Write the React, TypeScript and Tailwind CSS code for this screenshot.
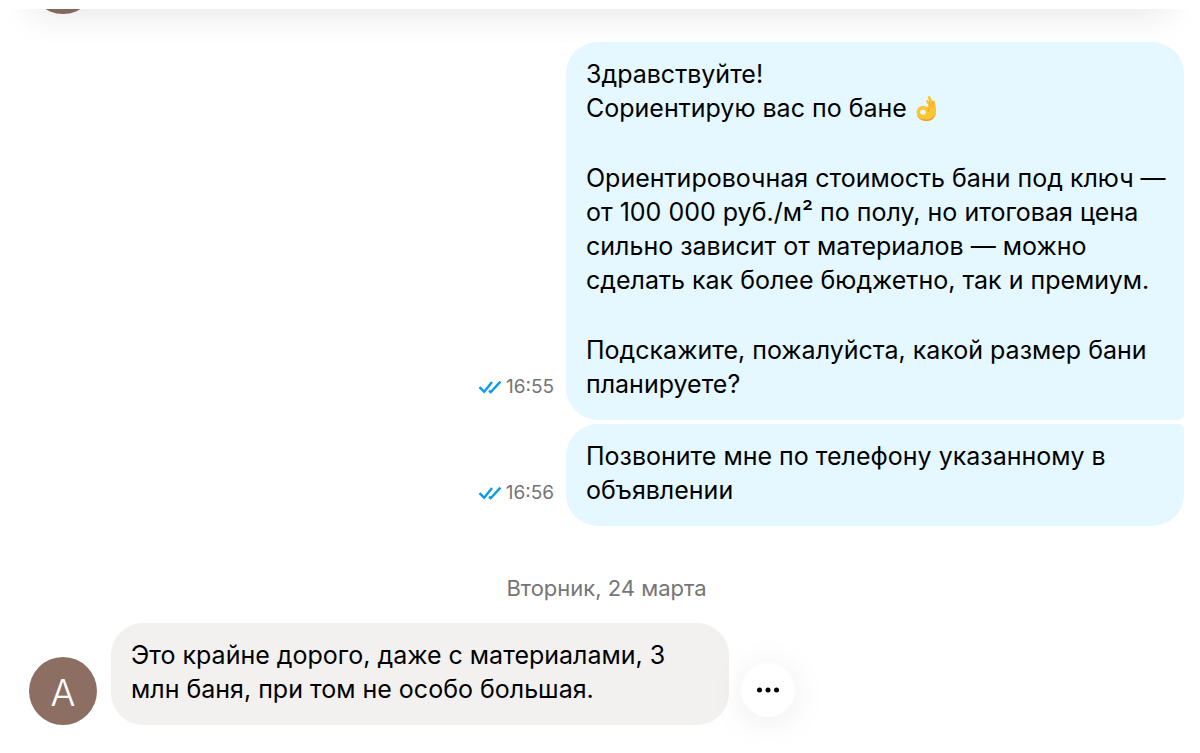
import type { ReactNode } from 'react';

function ReadMark() {
  return (
    <svg viewBox="0 0 24 16" className="h-4 w-6 shrink-0" fill="none" stroke="#0a9af0" strokeWidth="2.4" role="img" aria-label="Прочитано">
      <path d="M1.5 8.2 6.2 12.8 14 3" />
      <path d="M11 11.8 12.7 13.2 22.4 2.6" />
    </svg>
  );
}

function OkHand() {
  return (
    <svg viewBox="0 0 21 27" className="ml-0.5 inline-block h-[27px] w-[21px] align-[-5px]" role="img" aria-label="Всё хорошо">
      <path
        fillRule="evenodd"
        fill="#fcc633"
        d="M12.3 1.2c1-.8 2 .1 2.5 1.3L16.3 6c.4-.9 2.2-.8 2.5.4.7 2.8 1.3 6 1.3 9.300 0 6-3.800 10.300-9.300 10.300C5.500 26 1.300 23 .7 18.600.300 15.300 1.800 12 5.200 11.200c2.300-.6 4.800-.1 6.600 1.300l.5-2.200-1.900-3.500c-.6-1.300.8-2.500 1.800-1.300l1.200 1.600-1.500-4.100c-.2-.7-.1-1.400.4-1.800ZM5 15.200c-1.300.8-1.300 2.900.2 3.900 1.600 1.100 3.900.6 4.600-.9.600-1.400-.2-2.600-1.700-3.100-1.100-.4-2.200-.4-3.100.1Z"
      />
      <path d="M1 19.500c1.700 3.800 5.300 5.300 9.500 5.100 4.600-.2 7.700-2.700 9.400-6.600C19 23 15.600 26 10.800 26 5.800 26 1.700 23.500 1 19.500Z" fill="#ee9b32" />
      <path d="m13.300 7 1.200 4.500M16.300 6.200l.9 5.800M11.800 12.500c1.300.9 1.600 2.600 1 4.200" fill="none" stroke="#e49a2b" strokeWidth=".8" strokeLinecap="round" />
    </svg>
  );
}

function Outgoing({ time, shape, children }: { time: string; shape: string; children: ReactNode }) {
  return (
    <article className="flex items-end justify-end gap-3">
      <div className="mb-[19px] flex items-center gap-1 text-[19px] leading-7 text-[#757575]">
        <ReadMark />
        <time>{time}</time>
      </div>
      <div className={`w-[618px] bg-[#e5f7ff] px-5 pt-[15px] pb-[19px] ${shape}`}>{children}</div>
    </article>
  );
}

export default function App() {
  return (
    <div className="min-h-screen overflow-hidden bg-white font-['Inter','Noto_Sans',sans-serif] text-[25px] leading-[34px] whitespace-nowrap text-black">
      <header className="relative z-10 h-[9px] bg-white">
        <div className="absolute inset-x-0 top-full h-14 overflow-hidden" aria-hidden="true">
          <div className="mx-8 -mt-10 h-10 shadow-[0_4px_36px_rgba(0,0,0,0.11)]" />
        </div>
      </header>
      <main className="pr-4 pl-[29px]">
        <div className="-mt-[63px] size-[68px] rounded-full bg-[#8d6e63]" />
        <section className="mt-7 flex flex-col gap-1">
          <Outgoing time="16:55" shape="rounded-[32px] rounded-br-md">
            <div className="flex flex-col gap-9">
              <p>
                Здравствуйте!
                <br />
                Сориентирую вас по бане <OkHand />
              </p>
              <p>
                Ориентировочная стоимость бани под ключ —
                <br />
                от 100 000 руб./м² по полу, но итоговая цена
                <br />
                сильно зависит от материалов — можно
                <br />
                сделать как более бюджетно, так и премиум.
              </p>
              <p>
                Подскажите, пожалуйста, какой размер бани
                <br />
                планируете?
              </p>
            </div>
          </Outgoing>
          <Outgoing time="16:56" shape="rounded-[32px] rounded-tr-md">
            <p>
              Позвоните мне по телефону указанному в
              <br />
              объявлении
            </p>
          </Outgoing>
        </section>
        <h2 className="mt-[45px] text-center text-[22px] text-[#757575]">Вторник, 24 марта</h2>
        <article className="mt-[18px] flex items-end">
          <div className="flex size-[68px] shrink-0 items-center justify-center rounded-full bg-[#8d6e63] pt-1 text-[37px] font-light text-white">А</div>
          <div className="ml-3.5 w-[618px] rounded-[32px] bg-[#f2f1f0] px-5 pt-[15px] pb-[19px]">
            <p>
              Это крайне дорого, даже с материалами, 3
              <br />
              млн баня, при том не особо большая.
            </p>
          </div>
          <button
            type="button"
            aria-label="Действия с сообщением"
            className="mb-2 ml-3 flex size-[54px] shrink-0 items-center justify-center rounded-full bg-white shadow-[0_4px_36px_rgba(0,0,0,0.08)]"
          >
            <svg viewBox="0 0 24 6" className="h-1.5 w-6" aria-hidden="true">
              <circle cx="3.500" cy="3" r="2.500" />
              <circle cx="12" cy="3" r="2.500" />
              <circle cx="20.500" cy="3" r="2.500" />
            </svg>
          </button>
        </article>
      </main>
    </div>
  );
}
